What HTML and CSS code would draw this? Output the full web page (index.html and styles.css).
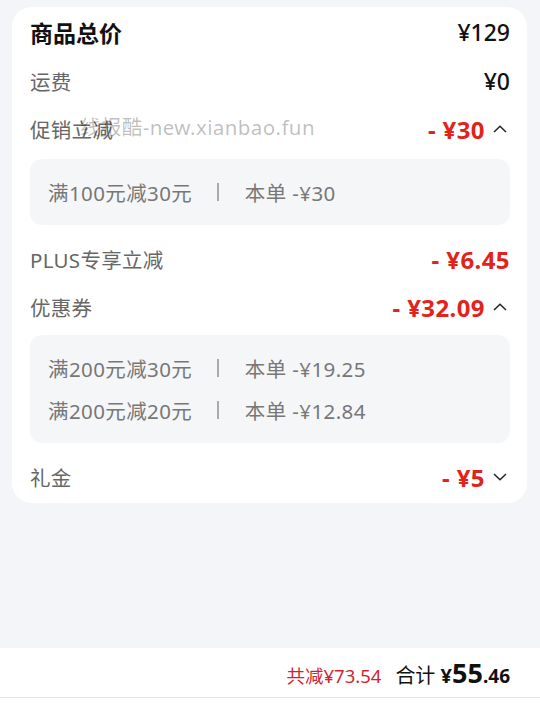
FILE: index.html
```html
<!DOCTYPE html>
<html lang="zh-CN">
	<head>
		<meta charset="utf-8" />
		<title>订单金额明细</title>
		<meta name="viewport" content="width=device-width, initial-scale=1" />
		<link rel="stylesheet" href="styles.css">
	</head>
	<body>
		<section class="card">
			<div class="row total">
				<span class="label">商品总价</span>
				<span class="amount">¥129</span>
			</div>
			<div class="row">
				<span class="label">运费</span>
				<span class="amount">¥0</span>
			</div>
			<div class="row">
				<span class="label">促销立减</span>
				<span class="right">
					<span class="amount minus">- ¥30</span>
					<svg class="chev" width="14" height="8" viewBox="0 0 14 8"><polyline points="1,7 7,1.2 13,7" /></svg>
				</span>
			</div>
			<div class="detail first">
				<div class="line">满100元减30元<span class="sep"></span>本单 -¥30</div>
			</div>
			<div class="row after">
				<span class="label">PLUS专享立减</span>
				<span class="amount minus">- ¥6.45</span>
			</div>
			<div class="row">
				<span class="label">优惠券</span>
				<span class="right">
					<span class="amount minus">- ¥32.09</span>
					<svg class="chev" width="14" height="8" viewBox="0 0 14 8"><polyline points="1,7 7,1.2 13,7" /></svg>
				</span>
			</div>
			<div class="detail">
				<div class="line">满200元减30元<span class="sep"></span>本单 -¥19.25</div>
				<div class="line">满200元减20元<span class="sep"></span>本单 -¥12.84</div>
			</div>
			<div class="row after">
				<span class="label">礼金</span>
				<span class="right">
					<span class="amount minus">- ¥5</span>
					<svg class="chev" width="14" height="8" viewBox="0 0 14 8"><polyline points="1,1 7,6.8 13,1" /></svg>
				</span>
			</div>
			<div class="mark">线报酷-new.xianbao.fun</div>
		</section>
		<div class="spacer"></div>
		<footer class="bar">
			<span class="saved">共减¥73.54</span>
			<span class="sum">合计 <b class="yen">¥</b><b class="big">55</b><b class="cents">.46</b></span>
		</footer>
		<div class="strip"></div>
	</body>
</html>
```

FILE: styles.css
```css
body {
	background: #f4f5f8;
	color: #111111;
	display: flex;
	flex-direction: column;
	font-family: "Noto Sans", "Noto Sans CJK SC", sans-serif;
	height: 708px;
	margin: 0;
	overflow: hidden;
}

.card {
	background: #ffffff;
	border-radius: 20px;
	margin: 7px 13px 0 12px;
	padding: 2px 17px 2px 18px;
	position: relative;
}

.row {
	align-items: center;
	display: flex;
	height: 48px;
	justify-content: space-between;
}

.row.total {
	height: 46px;
	padding-bottom: 2px;
}

.row.after {
	margin-top: 10px;
}

.label {
	color: #666666;
	font-size: 20.5px;
	letter-spacing: 0.3px;
}

.total .label {
	color: #111111;
	font-size: 23px;
	font-weight: 700;
	letter-spacing: 0;
}

.amount {
	font-size: 23px;
	font-weight: 500;
}

.amount.minus {
	color: #e2231a;
	font-size: 24px;
	font-weight: 700;
	letter-spacing: 0.4px;
}

.right {
	align-items: center;
	display: flex;
	gap: 8px;
	padding-right: 3px;
}

.chev {
	fill: none;
	stroke: #222222;
	stroke-width: 1.5;
}

.detail {
	background: #f5f6f8;
	border-radius: 12px;
	color: #777777;
	font-size: 20.5px;
	letter-spacing: 0.4px;
	margin-top: 4px;
	padding: 12px 18px;
}

.detail.first {
	margin-top: 6px;
}

.line {
	align-items: center;
	display: flex;
	height: 42px;
}

.sep {
	background: #aaaaaa;
	display: inline-block;
	height: 18px;
	margin: 0 26px 0 25px;
	width: 1.5px;
}

.mark {
	color: rgba(0, 0, 0, 0.26);
	font-size: 20.5px;
	left: 68px;
	letter-spacing: 0.4px;
	position: absolute;
	top: 104px;
}

.spacer {
	flex: 1;
}

.bar {
	align-items: baseline;
	background: #ffffff;
	border-bottom: 1px solid #e6e6e8;
	display: flex;
	gap: 14px;
	height: 49px;
	justify-content: flex-end;
	line-height: 49px;
	padding-right: 30px;
}

.saved {
	color: #d41f30;
	font-size: 18.5px;
}

.sum {
	color: #111111;
	font-size: 20px;
}

.yen {
	font-weight: 700;
}

.big {
	font-size: 27px;
	font-weight: 700;
}

.cents {
	font-size: 19px;
	font-weight: 700;
}

.strip {
	background: #ffffff;
	height: 10px;
}
```
